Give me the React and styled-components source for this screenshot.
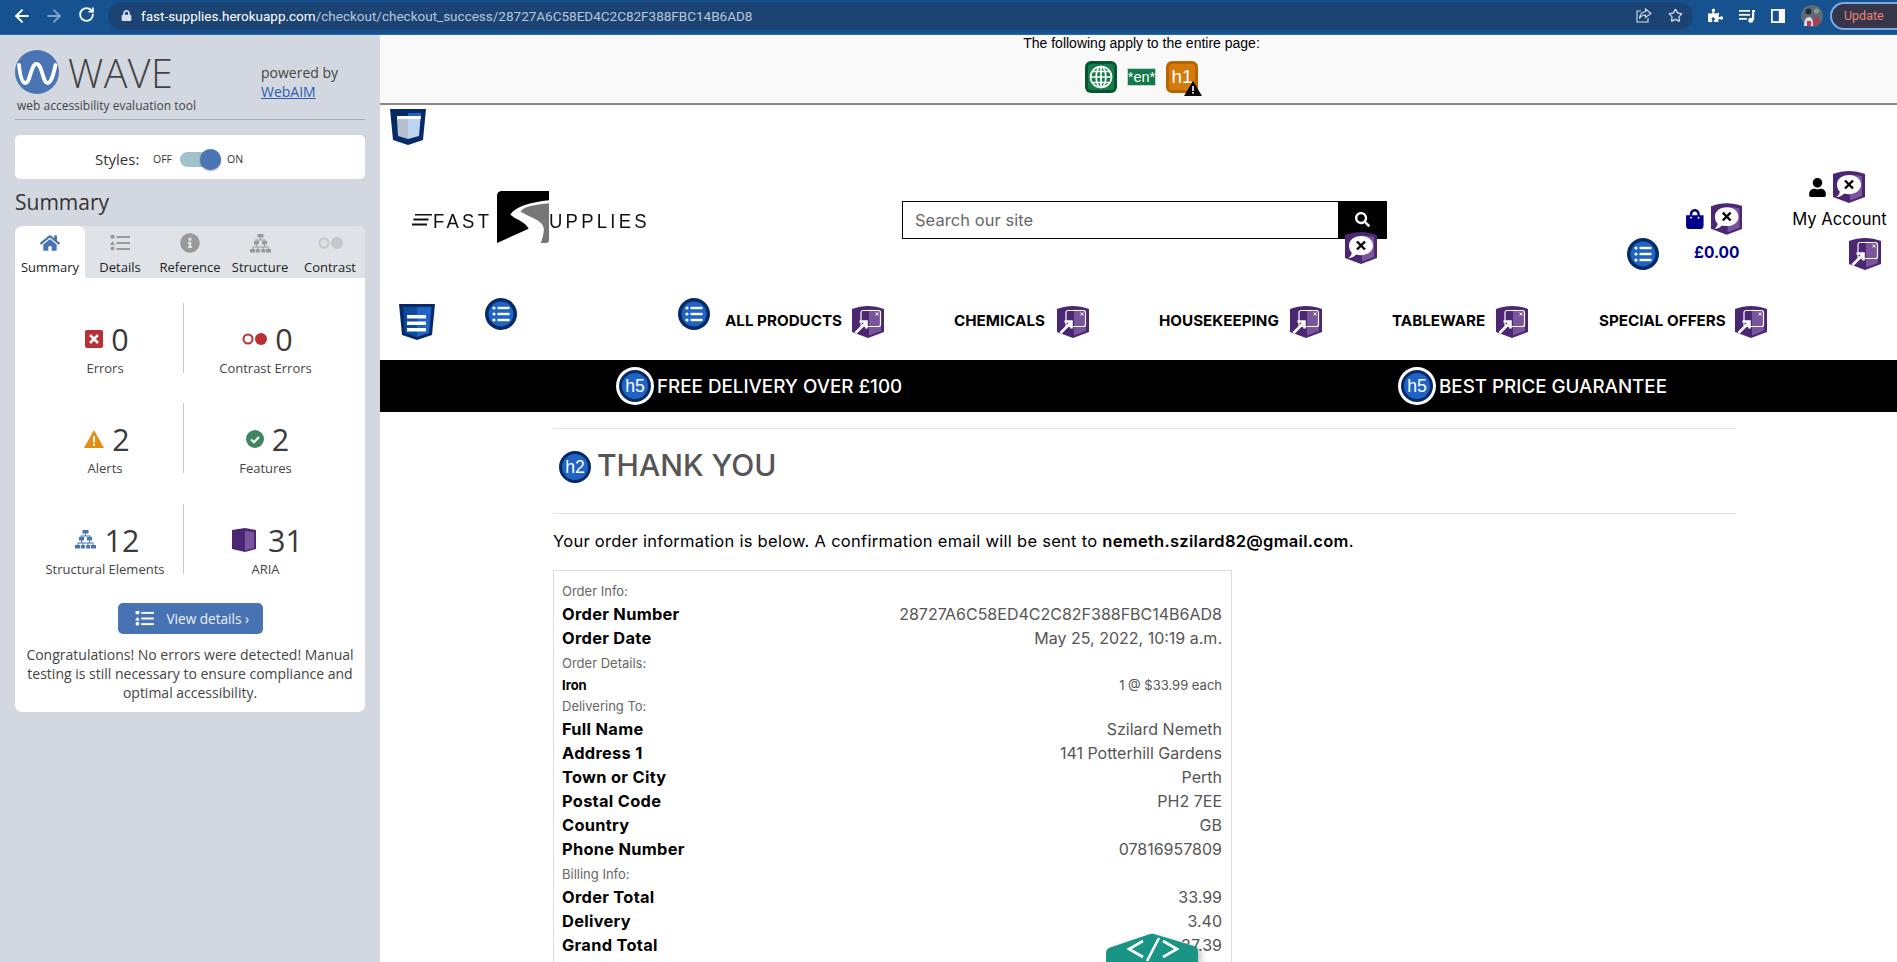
import React from "react";
import styled, { createGlobalStyle } from "styled-components";
import { ArrowLeft, ArrowRight, RotateCw, Star } from "lucide-react";
import { FaPuzzlePiece, FaLock, FaHome, FaInfoCircle, FaUser, FaSearch, FaShoppingBag } from "react-icons/fa";

const Global = createGlobalStyle`
  html, body { margin: 0; padding: 0; background: #fff; overflow: hidden; }
  * { box-sizing: border-box; }
`;

const Page = styled.div`
  width: 1897px; height: 962px; overflow: hidden; display: flex; flex-direction: column;
  position: relative; font-family: "Open Sans", sans-serif;
`;

/* Browser chrome */
const BrowserBar = styled.div`
  height: 35px; flex: none; background: #15528f; display: flex; align-items: center;
  padding: 0 0 3px 0; border-bottom: 1px solid #2a69ad; color: #fff;
`;
const NavBtn = styled.span`
  width: 32px; display: flex; justify-content: center; color: ${p => p.$dim ? "#7fa3cf" : "#fff"};
`;
const NavBtns = styled.div`display: flex; margin-left: 6px;`;
const Omnibox = styled.div`
  margin-left: 6px; width: 1585px; flex: none; height: 28px; border-radius: 14px; background: #1b4373;
  display: flex; align-items: center; padding: 0 10px 0 13px; font-family: "Roboto", sans-serif; font-size: 13.5px;
`;
const LockWrap = styled.span`display: flex; color: #d5dfec; margin-right: 9px;`;
const UrlHost = styled.span`color: #fff;`;
const UrlPath = styled.span`color: #b7c7dc;`;
const OmniEnd = styled.div`margin-left: auto; display: flex; align-items: center; gap: 16px; color: #d7e0ec;`;
const ToolIcons = styled.div`display: flex; align-items: center; margin-left: 15px; gap: 16px; flex: none;`;
const UpdatePill = styled.div`
  margin-left: 7px; width: 67px; flex: none; height: 28px; border: 2px solid #7ea7e6; border-right: none; border-radius: 14px 0 0 14px;
  background: #35364a; color: #ee8376; font-size: 12.5px; display: flex; align-items: center; padding-left: 12px; font-family: "Roboto", sans-serif;
`;

const Body = styled.div`display: flex; flex: 1; min-height: 0;`;

/* WAVE sidebar */
const Sidebar = styled.aside`
  width: 380px; flex: none; background: #d3d8e0; padding: 15px 15px 0; display: flex; flex-direction: column; color: #333;
`;
const BrandRow = styled.div`display: flex; align-items: flex-start; height: 44px;`;
const BrandName = styled.div`
  font-size: 39.5px; font-weight: 300; color: #444; line-height: 46px; margin-left: 9px; width: 193px; letter-spacing: .4px;
`;
const PoweredBy = styled.div`font-size: 14px; line-height: 19px; color: #444; margin-top: 13px;`;
const WebAim = styled.a`color: #2a5db0; text-decoration: underline; display: block;`;
const Tagline = styled.div`font-size: 12px; line-height: 16px; margin: 4px 0 0 2px; color: #444; height: 20px;`;
const Rule = styled.div`height: 1px; background: #a9adb3; margin-top: 1px;`;
const StylesBox = styled.div`
  margin-top: 15px; height: 44px; background: #fff; border-radius: 5px; display: flex; align-items: center; padding: 4px 0 0 80px;
`;
const StylesLabel = styled.span`font-size: 15px; width: 58px; color: #333;`;
const SwitchText = styled.span`font-size: 10.5px; color: #333;`;
const SwitchTrack = styled.span`
  width: 41px; height: 15px; margin: 0 6px 0 8px; background: #a3c3cc; border-radius: 8px; position: relative; display: block;
`;
const SwitchKnob = styled.span`
  position: absolute; right: 0; top: -3px; width: 21px; height: 21px; border-radius: 50%; background: #4a74b4;
  box-shadow: 0 1px 2px rgba(0,0,0,.35);
`;
const SummaryTitle = styled.h2`margin: 5px 0 6px; font-size: 21px; font-weight: 400; line-height: 36px; height: 36px; color: #333;`;
const Card = styled.div`background: #fff; border-radius: 7px; overflow: hidden; height: 486px; display: flex; flex-direction: column;`;
const Tabs = styled.div`display: grid; grid-template-columns: repeat(5, 70px); height: 52px; background: #dfe2e7;`;
const Tab = styled.div`
  background: ${p => p.$active ? "#fff" : "transparent"}; border-radius: ${p => p.$active ? "7px 7px 0 0" : "0"};
  display: flex; flex-direction: column; align-items: center; padding-top: 7px;
  color: ${p => p.$active ? "#4873b3" : "#999"};
`;
const TabIcon = styled.span`height: 20px; display: flex; align-items: center; justify-content: center;`;
const TabLabel = styled.span`font-size: 13px; line-height: 16px; margin-top: 6px; color: #222; white-space: nowrap;`;
const Stats = styled.div`
  display: grid; grid-template-columns: 156px 1px 163px; grid-auto-rows: 70px; row-gap: 30.5px; padding: 24.8px 0 0 12px;
`;
const Divider = styled.div`background: #c9c9c9; width: 1px; height: 70px;`;
const Stat = styled.div`display: flex; flex-direction: column; align-items: center; padding-top: 22px;`;
const StatTop = styled.div`display: flex; align-items: center; gap: ${p => p.$gap || 8}px; height: 28px; padding-left: 4px;`;
const StatNum = styled.span`font-size: 30.5px; line-height: 28px; color: #3a3a3a; font-weight: 400;`;
const StatLabel = styled.div`font-size: 13px; line-height: 16px; margin-top: 7px; color: #444; white-space: nowrap;`;
const ViewBtn = styled.div`
  align-self: center; margin-top: 29px; width: 145px; height: 31px; border-radius: 5px; background: #4873b3; color: #eef2f8;
  font-size: 13.6px; display: flex; align-items: center; padding-left: 17px; gap: 13px;
`;
const Congrats = styled.p`
  margin: 11px 9px 0; font-size: 14px; line-height: 19px; text-align: center; color: #444;
`;

/* Page */
const Main = styled.main`flex: 1; display: flex; flex-direction: column; min-width: 0; color: #000; font-family: "Inter", sans-serif;`;
const TopPanel = styled.div`
  height: 70px; flex: none; background: #f9f9f9; border-bottom: 2px solid #888; display: flex; flex-direction: column; align-items: center;
  font-family: "Liberation Sans", sans-serif; font-size: 14px; padding-left: 6px;
`;
const TopText = styled.div`line-height: 16px; color: #000;`;
const TopIcons = styled.div`display: flex; align-items: center; margin-top: 10px; height: 32px; gap: 10px;`;
const LangBadge = styled.span`
  width: 29px; height: 18px; background: #13794d; border: 1px solid #c8d4cc; color: #fff; font-size: 14.5px; display: flex; align-items: center; justify-content: center; white-space: nowrap;
`;
const HeadingTile = styled.span`
  width: 32px; height: 32px; border-radius: 6px; position: relative; display: flex;
  align-items: center; justify-content: center; color: #fff; font-size: 19px; background: #d57b0e; border: 3px solid #b86400;
`;
const WarnMark = styled.svg`position: absolute; right: -7px; bottom: -6px;`;
const LandmarkRow = styled.div`padding: 4px 0 0 10px; height: 39px; flex: none;`;
const HeaderRow = styled.div`display: flex; align-items: flex-start; margin-top: 26px; height: 100px; flex: none;`;
const LogoWrap = styled.div`
  margin: 21px 0 0 32px; width: 236px; height: 52px; display: flex; align-items: center;
  font-family: "Liberation Sans", sans-serif; font-weight: 400;
`;
const LogoWord = styled.span`font-size: 21px; letter-spacing: ${p => p.$ls}; width: ${p => p.$w || "auto"}; margin-left: ${p => p.$ml || 0}px; line-height: 1; margin-top: 6px; color: #111; transform: scaleX(.88); transform-origin: left center; white-space: nowrap;`;
const Search = styled.form`
  margin: 31px 0 0 254px; width: 485px; height: 38px; display: flex; position: relative;
`;
const SearchInput = styled.div`
  flex: 1; border: 1px solid #000; border-right: none; display: flex; align-items: center; padding-left: 12px; color: #666; font-size: 16.4px; letter-spacing: .1px;
`;
const SearchBtn = styled.div`
  width: 49px; background: #000; color: #fff; display: flex; justify-content: center; padding-top: 11px;
`;
const SearchFlag = styled.span`position: absolute; left: 443px; top: 31px; display: block; line-height: 0;`;
const SideList = styled.div`margin: 68px 0 0 240px; line-height: 0;`;
const Cart = styled.div`margin: 33px 0 0 26px; width: 57px; display: flex; flex-direction: column;`;
const IconPair = styled.div`display: flex; align-items: center; gap: 6px; color: ${p => p.$color || "#000"}; padding-right: ${p => p.$pr || 0}px; margin-top: ${p => p.$mt || 0}px;`;
const CartTotal = styled.div`font-size: 15.5px; font-weight: 700; color: #00008b; margin: 8px 0 0 9px; line-height: 20px; white-space: nowrap;`;
const Account = styled.div`margin-left: 50px; width: 95px; display: flex; flex-direction: column; align-items: center;`;
const AccountLabel = styled.div`font-size: 16.6px; line-height: 20px; margin-top: 6px; white-space: nowrap;`;
const AccountFlag = styled.span`align-self: flex-end; margin: 9px 6px 0 0; line-height: 0;`;

const NavRow = styled.nav`height: 62px; margin-top: 28px; display: flex; align-items: flex-start; flex: none;`;
const NavLandmark = styled.span`margin: 6px 0 0 19px; line-height: 0;`;
const NavCircle = styled.span`margin-left: ${p => p.$ml}px; line-height: 0;`;
const NavList = styled.div`
  margin: 8px 0 0 15px; display: grid; grid-template-columns: 229px 205px 233px 207px 168px;
`;
const NavItem = styled.a`display: flex; align-items: center; gap: 10px; height: 32px;`;
const NavLabel = styled.span`width: ${p => p.$w}px; font-size: 15.2px; font-weight: 650; color: #000; white-space: nowrap; padding-bottom: 4px;`;

const Banner = styled.div`
  height: 52px; background: #000; flex: none; display: grid; grid-template-columns: 782px 1fr; padding-left: 236px; align-items: center;
`;
const BannerItem = styled.div`display: flex; align-items: center; gap: 3px;`;
const BannerText = styled.h5`margin: 0; color: #fff; font-size: 18.8px; font-weight: 550; white-space: nowrap;`;
const HeadingBadge = styled.span`
  width: ${p => p.$size}px; height: ${p => p.$size}px; border-radius: 50%; background: #1f63c4; border: ${p => p.$size * 0.1}px solid #062a66;
  box-shadow: ${p => p.$ring ? "0 0 0 3px #fff" : "none"}; color: #fff; font-family: "Liberation Sans", sans-serif; font-size: ${p => p.$size * 0.55}px;
  display: flex; align-items: center; justify-content: center; flex: none;
`;
const RingWrap = styled.span`padding: 3px; display: flex;`;

const Content = styled.section`margin-left: 173px; width: 1183px; margin-top: 16px; display: flex; flex-direction: column;`;
const Hr = styled.div`height: 1px; background: #e2e2e2;`;
const TitleRow = styled.div`height: 84px; padding: 22px 0 0 6px; display: flex; align-items: flex-start; gap: 6px;`;
const Title = styled.h2`margin: -1px 0 0; font-size: 30px; line-height: 30px; font-weight: 500; color: #555; white-space: nowrap;`;
const Lead = styled.p`margin: 15px 0 0; font-size: 16.5px; line-height: 24px; letter-spacing: .28px; color: #000; white-space: nowrap;`;
const Strong = styled.strong`font-weight: 600;`;
const OrderBox = styled.div`margin-top: 17px; width: 679px; border: 1px solid #ddd; padding: 10px 9px 0 8px; height: 420px;`;
const SectionLabel = styled.div`height: 21px; line-height: 21px; font-size: 13px; color: #666; margin-top: ${p => p.$mt || 0}px;`;
const Row = styled.div`
  display: flex; justify-content: space-between; align-items: center; height: ${p => p.$small ? 22 : 24}px;
  font-size: ${p => p.$small ? 13 : 16}px;
`;
const RowKey = styled.span`font-weight: 650; color: #000; letter-spacing: ${p => p.$small ? 0 : ".3px"}; font-size: ${p => p.$small ? 13 : 16.4}px;`;
const RowVal = styled.span`color: #555;`;
const CodeTab = styled.div`
  position: absolute; left: 1106px; top: 933px; width: 92px; height: 29px; filter: drop-shadow(3px 3px 3px rgba(0,0,0,.25));
  color: #fff; line-height: 0;
`;

/* Drawn icons */
const Shield = ({ kind }) => (
  <svg width="32" height="32" viewBox="0 0 32 32">
    <path d="M0 3C5 1 11 0 16 0s11 1 16 3v23l-16 6-16-6z" fill="#4b2673" />
    <path d="M17 3.5 29 5v20l-12 4.5z" fill="#7a559c" />
    {kind === "arrow" ? (
      <g fill="none" stroke="#fff">
        <rect x="9" y="4.5" width="19.5" height="16" rx="2" strokeWidth="1.2" />
        <path d="M3.5 27 14 16.5M7.5 15.5h7v7" strokeWidth="2.6" />
        <path d="M23.5 6.5l3 3M26.5 6.5l-3 3" strokeWidth="1" />
      </g>
    ) : (
      <g>
        <path d="M16 4c7.2 0 12 4.3 12 9.6s-4.8 9.6-12 9.6c-1.8 0-3.4-.2-4.8-.7C9.500 24.500 7 25.800 3.500 26c1.800-1.400 3-3 3.300-5.200C5 19 4 16.500 4 13.600 4 8.300 8.800 4 16 4z" fill="#fff" />
        <path d="M12 9.500l8 8M20 9.500l-8 8" stroke="#000" strokeWidth="2.400" />
      </g>
    )}
  </svg>
);
const Landmark = ({ kind }) => (
  <svg width="36" height="36" viewBox="0 0 36 36">
    <path d="M0 0h36l-3 31-15 5-15-5z" fill="#062a66" />
    {kind === "region" ? (
      <g>
        <path d="M7 10h11v20l-10-3z" fill="#b5c0cf" />
        <path d="M18 10h12.500l-1.500 17-11 3z" fill="#bcd3f2" />
        <path d="M18 4h13v3H18z" fill="#1f63c4" />
        <path d="M7 7h24v3H7z" fill="#fff" />
      </g>
    ) : (
      <g>
        <path d="M4 3h14v30l-12-4z" fill="#0e4a9c" />
        <path d="M18 3h14.500l-2.500 26-12 4z" fill="#1f63c4" />
        <path d="M8 11h19v3.500H8zM8 17.500h19V21H8zM8 24h19v3.500H8z" fill="#fff" />
      </g>
    )}
  </svg>
);
const ListCircle = () => (
  <svg width="32" height="32" viewBox="0 0 32 32">
    <circle cx="16" cy="16" r="16" fill="#062a66" />
    <circle cx="16" cy="16" r="12.500" fill="#1f63c4" />
    <g fill="#fff">
      <circle cx="9" cy="10" r="1.600" /><circle cx="9" cy="16" r="1.600" /><circle cx="9" cy="22" r="1.600" />
      <rect x="12.500" y="8.800" width="12" height="2.400" /><rect x="12.500" y="14.800" width="12" height="2.400" /><rect x="12.500" y="20.800" width="12" height="2.400" />
    </g>
  </svg>
);
const GlobeTile = () => (
  <svg width="32" height="32" viewBox="0 0 32 32">
    <rect width="32" height="32" rx="6" fill="#06552f" />
    <rect x="3" y="3" width="26" height="26" rx="3" fill="#157a4c" />
    <g fill="none" stroke="#fff" strokeWidth="1.700">
      <circle cx="16" cy="16" r="10.500" />
      <ellipse cx="16" cy="16" rx="4.800" ry="10.500" />
      <path d="M16 5.500v21M5.500 16h21M7 10.500h18M7 21.500h18" />
    </g>
  </svg>
);
const ListGlyph = ({ color, w = 20, h = 16 }) => (
  <svg width={w} height={h} viewBox="0 0 20 16" fill={color}>
    <rect x="0.500" y="0" width="4" height="3.500" rx=".5" />
    <path d="M2.500 6 5 10H0z" />
    <circle cx="2.500" cy="13.500" r="2" />
    <rect x="6.500" y="1" width="13.500" height="2" /><rect x="6.500" y="7" width="13.500" height="2" /><rect x="6.500" y="13" width="13.500" height="2" />
  </svg>
);
const TreeGlyph = ({ color, w = 21, h = 19 }) => (
  <svg width={w} height={h} viewBox="0 0 21 19" fill={color}>
    <rect x="7.500" y="0" width="6" height="3.500" />
    <rect x="4" y="7" width="5" height="3.500" /><rect x="12" y="7" width="5" height="3.500" />
    <rect x="0" y="15" width="5" height="3.500" /><rect x="5.800" y="15" width="4" height="3.500" /><rect x="11.200" y="15" width="4" height="3.500" /><rect x="16" y="15" width="5" height="3.500" />
    <path d="M10 3.500h1V5.500h4.500V7h-1V6.500h-8V7h-1V5.500H10zM6 10.500h1V12.500h3v0H14V10.500h1V12.500h3.500V15h-1V13.500h-4V15h-1V13.500h-4V15h-1V13.500H3.500V15h-1V12.500H6z" />
  </svg>
);
const Dots = ({ color, hollowColor, w = 25 }) => (
  <svg width={w} height="12" viewBox="0 0 25 12">
    <circle cx="6" cy="6" r="4.500" fill="none" stroke={hollowColor || color} strokeWidth="2" />
    <circle cx="19" cy="6" r="6" fill={color} />
  </svg>
);
const ShareIcon = () => (
  <svg width="16" height="15" viewBox="0 0 16 15" fill="none" stroke="currentColor" strokeWidth="1.100">
    <path d="M5 3H1v11h11v-4" /><path d="M9.500 1 15 5.500 9.500 9.500V7C7 7 5 8 3.500 10.500 4 6.500 6 4 9.500 3.500z" />
  </svg>
);
const QueueIcon = () => (
  <svg width="16" height="14" viewBox="0 0 16 14" fill="#fff">
    <rect x="0" y="1" width="11" height="1.700" /><rect x="0" y="5" width="11" height="1.700" /><rect x="0" y="9" width="8" height="1.700" />
    <rect x="13" y="1" width="2.200" height="10" /><circle cx="11.800" cy="11.300" r="2.500" /><rect x="13" y="1" width="3" height="2" />
  </svg>
);
const PanelIcon = () => (
  <svg width="14" height="14" viewBox="0 0 14 14">
    <rect width="14" height="14" fill="#fff" /><rect x="1.800" y="1.800" width="6" height="10.400" fill="#15528f" />
  </svg>
);
const Avatar = () => (
  <svg width="22" height="22" viewBox="0 0 22 22">
    <circle cx="11" cy="11" r="11" fill="#5d6a78" />
    <circle cx="7.500" cy="6.500" r="3" fill="#222a33" />
    <circle cx="15.500" cy="6" r="2.600" fill="#8c9a8e" />
    <path d="M3 21c0-6 2-9 5-9s4 3 4 9z" fill="#d8dde3" />
    <path d="M12 21c0-6 1-9 4-9s3 3 3 7z" fill="#a84050" />
    <path d="M6 16h4v5H6z" fill="#c8324a" />
  </svg>
);
const WaveLogo = () => (
  <svg width="44" height="44" viewBox="0 0 44 44">
    <circle cx="22" cy="22" r="22" fill="#4a74b4" />
    <path d="M4 15c1 10 3 18 6.500 18 5 0 5-19 11-19 6 0 6 19 11 19 4 0 6-9 8-18" fill="none" stroke="#fff" strokeWidth="3.800" strokeLinecap="round" />
  </svg>
);
const LogoMark = () => (
  <svg width="52" height="52" viewBox="0 0 51 51" style={{ flex: "none" }}>
    <path d="M5 0h46v51H0V5q0-5 5-5z" fill="#000" />
    <path d="M51 9C33 11 18 15 13 23c5 5 15 7 18 14L0 51h51z" fill="#fff" />
    <path d="M51 12c-11 1-25 3-28 8 9 6 22 8 23 17 0 6-2 10-3 14h5q3 0 3-3z" fill="#777" />
  </svg>
);
const LogoStripes = () => (
  <svg width="20" height="12" viewBox="0 0 20 12" style={{ flex: "none", marginTop: 6 }}>
    <path d="M3 0.500h17M1.500 5.500h15M0 10.500h15" stroke="#111" strokeWidth="1.800" />
  </svg>
);

const Nav = [
  ["ALL PRODUCTS", 117], ["CHEMICALS", 93], ["HOUSEKEEPING", 121], ["TABLEWARE", 94], ["SPECIAL OFFERS", 126],
];
const stats = [
  { n: "0", l: "Errors", i: <svg width="18" height="18" viewBox="0 0 18 18"><rect width="18" height="18" rx="2" fill="#b92f34" /><path d="M5 5l8 8M13 5l-8 8" stroke="#fff" strokeWidth="2.600" /></svg> },
  { n: "0", l: "Contrast Errors", i: <Dots color="#b92f34" /> },
  { n: "2", l: "Alerts", i: <svg width="20" height="18" viewBox="0 0 20 18"><path d="M10 0l10 18H0z" fill="#e28d14" /><path d="M9 6h2v6.500H9zM9 13.800h2v2H9z" fill="#fff" /></svg> },
  { n: "2", l: "Features", i: <svg width="18" height="18" viewBox="0 0 18 18"><circle cx="9" cy="9" r="9" fill="#418463" /><path d="M5 9.500l3 2.800 5-5.300" stroke="#fff" strokeWidth="2" fill="none" /></svg> },
  { n: "12", l: "Structural Elements", i: <TreeGlyph color="#4873b3" />, g: 9 },
  { n: "31", l: "ARIA", i: <svg width="24" height="24" viewBox="0 0 24 24"><path d="M0 2 13 0l11 2v19l-11 3-13-3z" fill="#4b2673" /><path d="M13 3l9 1v16l-9 2.500z" fill="#7a559c" /></svg>, g: 12 },
];

const OrderRow = ({ k, v, small }) => (
  <Row $small={small}><RowKey $small={small}>{k}</RowKey><RowVal>{v}</RowVal></Row>
);

export default function App() {
  return (
    <Page>
      <Global />
      <BrowserBar>
        <NavBtns>
          <NavBtn><ArrowLeft size={20} strokeWidth={2.4} /></NavBtn>
          <NavBtn $dim><ArrowRight size={20} strokeWidth={2.2} /></NavBtn>
          <NavBtn><RotateCw size={17} strokeWidth={2.6} /></NavBtn>
        </NavBtns>
        <Omnibox>
          <LockWrap><FaLock size={11} /></LockWrap>
          <UrlHost>fast-supplies.herokuapp.com</UrlHost>
          <UrlPath>/checkout/checkout_success/28727A6C58ED4C2C82F388FBC14B6AD8</UrlPath>
          <OmniEnd><ShareIcon /><Star size={15} /></OmniEnd>
        </Omnibox>
        <ToolIcons>
          <FaPuzzlePiece size={15} /><QueueIcon /><PanelIcon /><Avatar />
        </ToolIcons>
        <UpdatePill>Update</UpdatePill>
      </BrowserBar>
      <Body>
        <Sidebar>
          <BrandRow>
            <WaveLogo />
            <BrandName>WAVE</BrandName>
            <PoweredBy>powered by<WebAim>WebAIM</WebAim></PoweredBy>
          </BrandRow>
          <Tagline>web accessibility evaluation tool</Tagline>
          <Rule />
          <StylesBox>
            <StylesLabel>Styles:</StylesLabel>
            <SwitchText>OFF</SwitchText>
            <SwitchTrack><SwitchKnob /></SwitchTrack>
            <SwitchText>ON</SwitchText>
          </StylesBox>
          <SummaryTitle>Summary</SummaryTitle>
          <Card>
            <Tabs>
              <Tab $active><TabIcon><FaHome size={20} /></TabIcon><TabLabel>Summary</TabLabel></Tab>
              <Tab><TabIcon><ListGlyph color="#999" /></TabIcon><TabLabel>Details</TabLabel></Tab>
              <Tab><TabIcon><FaInfoCircle size={20} /></TabIcon><TabLabel>Reference</TabLabel></Tab>
              <Tab><TabIcon><TreeGlyph color="#999" /></TabIcon><TabLabel>Structure</TabLabel></Tab>
              <Tab><TabIcon><Dots color="#c4c6ca" /></TabIcon><TabLabel>Contrast</TabLabel></Tab>
            </Tabs>
            <Stats>
              {stats.map((s, i) => (
                <React.Fragment key={s.l}>
                  {i % 2 === 1 && <Divider />}
                  <Stat>
                    <StatTop $gap={s.g}>{s.i}<StatNum>{s.n}</StatNum></StatTop>
                    <StatLabel>{s.l}</StatLabel>
                  </Stat>
                </React.Fragment>
              ))}
            </Stats>
            <ViewBtn><ListGlyph color="#fff" w={19} h={15} />View details ›</ViewBtn>
            <Congrats>Congratulations! No errors were detected! Manual testing is still necessary to ensure compliance and optimal accessibility.</Congrats>
          </Card>
        </Sidebar>
        <Main>
          <TopPanel>
            <TopText>The following apply to the entire page:</TopText>
            <TopIcons>
              <GlobeTile />
              <LangBadge>*en*</LangBadge>
              <HeadingTile>h1
                <WarnMark width="18" height="15" viewBox="0 0 18 15"><path d="M9 0l9 15H0z" fill="#000" /><path d="M8.200 5h1.600v5H8.200zM8.200 11h1.600v1.800H8.200z" fill="#fff" /></WarnMark>
              </HeadingTile>
            </TopIcons>
          </TopPanel>
          <LandmarkRow><Landmark kind="region" /></LandmarkRow>
          <HeaderRow>
            <LogoWrap>
              <LogoStripes />
              <LogoWord $ls="3.700px" $w="64px" $ml={1}>FAST</LogoWord>
              <LogoMark />
              <LogoWord $ls="3.700px">UPPLIES</LogoWord>
            </LogoWrap>
            <Search>
              <SearchInput>Search our site</SearchInput>
              <SearchBtn><FaSearch size={15} /></SearchBtn>
              <SearchFlag><Shield kind="bubble" /></SearchFlag>
            </Search>
            <SideList><ListCircle /></SideList>
            <Cart>
              <IconPair $color="#00008b"><FaShoppingBag size={20} /><Shield kind="bubble" /></IconPair>
              <CartTotal>£0.00</CartTotal>
            </Cart>
            <Account>
              <IconPair $pr={6} $mt={1}><FaUser size={19} /><Shield kind="bubble" /></IconPair>
              <AccountLabel>My Account</AccountLabel>
              <AccountFlag><Shield kind="arrow" /></AccountFlag>
            </Account>
          </HeaderRow>
          <NavRow>
            <NavLandmark><Landmark kind="nav" /></NavLandmark>
            <NavCircle $ml={50}><ListCircle /></NavCircle>
            <NavCircle $ml={161}><ListCircle /></NavCircle>
            <NavList>
              {Nav.map(([t, w]) => (
                <NavItem key={t}><NavLabel $w={w}>{t}</NavLabel><Shield kind="arrow" /></NavItem>
              ))}
            </NavList>
          </NavRow>
          <Banner>
            <BannerItem><RingWrap><HeadingBadge $size={32} $ring>h5</HeadingBadge></RingWrap><BannerText>FREE DELIVERY OVER £100</BannerText></BannerItem>
            <BannerItem><RingWrap><HeadingBadge $size={32} $ring>h5</HeadingBadge></RingWrap><BannerText>BEST PRICE GUARANTEE</BannerText></BannerItem>
          </Banner>
          <Content>
            <Hr />
            <TitleRow><HeadingBadge $size={32}>h2</HeadingBadge><Title>THANK YOU</Title></TitleRow>
            <Hr />
            <Lead>Your order information is below. A confirmation email will be sent to <Strong>nemeth.szilard82@gmail.com</Strong>.</Lead>
            <OrderBox>
              <SectionLabel>Order Info:</SectionLabel>
              <OrderRow k="Order Number" v="28727A6C58ED4C2C82F388FBC14B6AD8" />
              <OrderRow k="Order Date" v="May 25, 2022, 10:19 a.m." />
              <SectionLabel $mt={3}>Order Details:</SectionLabel>
              <OrderRow small k="Iron" v="1 @ $33.99 each" />
              <SectionLabel>Delivering To:</SectionLabel>
              <OrderRow k="Full Name" v="Szilard Nemeth" />
              <OrderRow k="Address 1" v="141 Potterhill Gardens" />
              <OrderRow k="Town or City" v="Perth" />
              <OrderRow k="Postal Code" v="PH2 7EE" />
              <OrderRow k="Country" v="GB" />
              <OrderRow k="Phone Number" v="07816957809" />
              <SectionLabel $mt={3}>Billing Info:</SectionLabel>
              <OrderRow k="Order Total" v="33.99" />
              <OrderRow k="Delivery" v="3.40" />
              <OrderRow k="Grand Total" v="37.39" />
            </OrderBox>
          </Content>
        </Main>
      </Body>
      <CodeTab>
        <svg width="92" height="29" viewBox="0 0 92 29">
          <path d="M0 29V20q0-4 4-5.500L44 1q2-.6 4 0l40 12q4 1 4 5v11z" fill="#1a9484" />
          <path d="M37 8 23 16l14 8M57 8l14 8-14 8M53 5 41 28" fill="none" stroke="#fff" strokeWidth="2.600" />
        </svg>
      </CodeTab>
    </Page>
  );
}
